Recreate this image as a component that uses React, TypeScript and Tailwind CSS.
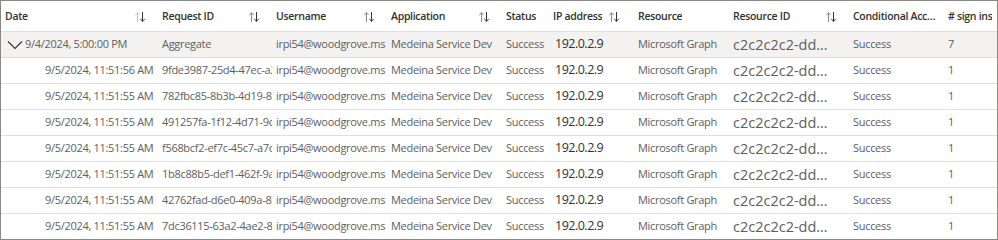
type Row = {
  date: string;
  requestId: string;
  username: string;
  application: string;
  status: string;
  ip: string;
  resource: string;
  resourceId: string;
  conditional: string;
  signIns: number;
};

/** Column widths in px, left to right. */
const COLS = "grid-cols-[157px_114px_115px_115px_47px_85px_95px_120px_95px_1fr]";

const CHILD_IDS = [
  "9fde3987-25d4-47ec-a2b1-6f0c9d3e1a44",
  "782fbc85-8b3b-4d19-8e2a-51c7d0f9b312",
  "491257fa-1f12-4d71-9c0d-7a3e8b2f6c15",
  "f568bcf2-ef7c-45c7-a7d1-0b9e4c2a8f63",
  "1b8c88b5-def1-462f-9a3c-e5d2f7b01c98",
  "42762fad-d6e0-409a-8b7e-3c1f9a6d2e07",
  "7dc36115-63a2-4ae2-8f4b-9d0c1e7a5b26",
];

const base = {
  username: "irpi54@woodgrove.ms",
  application: "Medeina Service Dev",
  status: "Success",
  ip: "192.0.2.9",
  resource: "Microsoft Graph",
  resourceId: "c2c2c2c2-dddd-2222-eeee-3333ffff4444",
  conditional: "Success",
};

const rows: Row[] = CHILD_IDS.map((id, i) => ({
  ...base,
  date: i === 0 ? "9/5/2024, 11:51:56 AM" : "9/5/2024, 11:51:55 AM",
  requestId: id,
  signIns: 1,
}));

function SortIcon({ active }: { active?: boolean }) {
  return (
    <svg width="12" height="12" viewBox="0 0 12 12" className="shrink-0">
      <path
        d="M3.5 10.5V1.8M1.5 3.8l2-2 2 2"
        stroke={active ? "#c8c6c4" : "#8a8886"}
        strokeWidth="1"
        fill="none"
        strokeLinecap="round"
      />
      <path
        d="M8.5 1.5v8.7M6.5 8.2l2 2 2-2"
        stroke="#323130"
        strokeWidth="1"
        fill="none"
        strokeLinecap="round"
      />
    </svg>
  );
}

function HeadCell({
  label,
  sort,
  active,
  tight,
}: {
  label: string;
  sort?: boolean;
  active?: boolean;
  tight?: boolean;
}) {
  return (
    <div
      className={`flex min-w-0 items-center pl-1 pt-[2px] ${
        !sort ? "pr-1" : tight ? "gap-[6px] pr-3" : "justify-between gap-1 pr-3"
      }`}
    >
      <span className="truncate">{label}</span>
      {sort && <SortIcon active={active} />}
    </div>
  );
}

function Cell({
  children,
  className = "",
}: {
  children: React.ReactNode;
  className?: string;
}) {
  return (
    <div
      className={`flex min-w-0 items-center overflow-hidden whitespace-nowrap pl-1 ${className}`}
    >
      {children}
    </div>
  );
}

function DataRow({ row, aggregate }: { row: Row; aggregate?: boolean }) {
  return (
    <div
      className={`grid h-[26px] shrink-0 border-b border-[#e1dfdd] ${COLS} ${
        aggregate ? "bg-[#f3f2f1]" : "bg-white"
      }`}
    >
      {aggregate ? (
        <Cell className="pl-[6px]">
          <svg width="16" height="10" viewBox="0 0 16 10" className="mr-[2px] shrink-0">
            <path d="M1 1.5l7 7 7-7" stroke="#323130" strokeWidth="1.1" fill="none" />
          </svg>
          <span>{row.date}</span>
        </Cell>
      ) : (
        <Cell className="pl-[44px]">{row.date}</Cell>
      )}
      <Cell>{row.requestId}</Cell>
      <Cell>{row.username}</Cell>
      <Cell>{row.application}</Cell>
      <Cell>{row.status}</Cell>
      <Cell className="pl-[6px] text-[12.5px] font-medium tracking-[-0.5px] text-[#323130]">
        {row.ip}
      </Cell>
      <Cell>{row.resource}</Cell>
      <Cell className="pr-[18px] text-[14.5px] tracking-normal">
        <span className="truncate">{row.resourceId}</span>
      </Cell>
      <Cell>{row.conditional}</Cell>
      <Cell>{row.signIns}</Cell>
    </div>
  );
}

export default function App() {
  const aggregate: Row = {
    ...base,
    date: "9/4/2024, 5:00:00 PM",
    requestId: "Aggregate",
    signIns: 7,
  };

  return (
    <div
      className="flex h-[240px] w-[998px] flex-col overflow-hidden border border-[#8a8886] bg-white text-[11px] tracking-[-0.3px] text-[#605e5c]"
      style={{ fontFamily: '"Segoe UI", "Open Sans", sans-serif' }}
    >
      {/* Header */}
      <div
        className={`grid h-[31px] shrink-0 border-b border-[#e1dfdd] text-[10.5px] font-semibold text-[#323130] ${COLS}`}
      >
        <HeadCell label="Date" sort active />
        <HeadCell label="Request ID" sort />
        <HeadCell label="Username" sort />
        <HeadCell label="Application" sort />
        <HeadCell label="Status" />
        <HeadCell label="IP address" sort tight />
        <HeadCell label="Resource" />
        <HeadCell label="Resource ID" sort />
        <HeadCell label="Conditional Access" />
        <HeadCell label="# sign ins" />
      </div>

      <DataRow row={aggregate} aggregate />
      {rows.map((r) => (
        <DataRow key={r.requestId} row={r} />
      ))}
    </div>
  );
}
